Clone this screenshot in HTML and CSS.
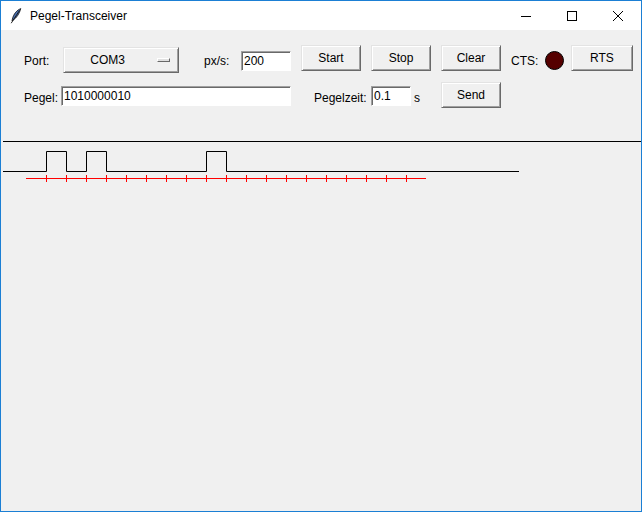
FILE: index.html
```html
<!DOCTYPE html>
<html>
<head>
<meta charset="utf-8">
<title>Pegel-Transceiver</title>
<link rel="stylesheet" href="styles.css">
</head>
<body>
<div class="window">
  <div class="titlebar">
    <svg class="app-icon" width="12" height="16" viewBox="0 0 12 16">
      <path d="M10.8 0.6 C7 2 3.5 6 2.4 11 L2 13 L3.4 12 C6.4 9.8 9.4 6 10.8 0.6 Z" fill="#4a6fae" stroke="#111" stroke-width="0.8"/>
      <path d="M9.5 2.5 L1.2 15.2" stroke="#111" stroke-width="0.9" fill="none"/>
    </svg>
    <span class="title">Pegel-Transceiver</span>
    <div class="caption">
      <div class="cap-btn"><svg width="12" height="12" viewBox="0 0 12 12"><path d="M1 6.5 H11" stroke="#000" stroke-width="1"/></svg></div>
      <div class="cap-btn"><svg width="12" height="12" viewBox="0 0 12 12"><rect x="1.5" y="1.5" width="9" height="9" fill="none" stroke="#000" stroke-width="1"/></svg></div>
      <div class="cap-btn"><svg width="12" height="12" viewBox="0 0 12 12"><path d="M1 1 L11 11 M11 1 L1 11" stroke="#000" stroke-width="1"/></svg></div>
    </div>
  </div>

  <div class="controls">
    <div class="row row1">
      <span class="lbl w-port">Port:</span>
      <div class="btn optmenu"><span class="opt-text">COM3</span><span class="indicator"></span></div>
      <span class="lbl w-pxs">px/s:</span>
      <div class="entry w-pxentry">200</div>
      <div class="btn push ml10">Start</div>
      <div class="btn push ml10">Stop</div>
      <div class="btn push ml10">Clear</div>
      <span class="lbl cts">CTS:</span>
      <span class="led"></span>
      <div class="btn push rts">RTS</div>
    </div>
    <div class="row row2">
      <span class="lbl w-pegel">Pegel:</span>
      <div class="entry w-pegelentry">1010000010</div>
      <span class="lbl w-pzeit">Pegelzeit:</span>
      <div class="entry w-zeitentry">0.1</div>
      <span class="lbl w-s">s</span>
      <div class="btn push send">Send</div>
    </div>
  </div>

  <div class="canvas">
    <svg width="640" height="80" viewBox="1 120 640 80">
      <path d="M3 141.5 H641" stroke="#000" stroke-width="1" fill="none"/>
      <path d="M3 171.5 H46.5 V151.5 H66.5 V171.5 H86.5 V151.5 H106.5 V171.5 H206.5 V151.5 H226.5 V171.5 H519" stroke="#000" stroke-width="1" fill="none"/>
      <path d="M26 178.5 H426" stroke="#ff0000" stroke-width="1" fill="none"/>
      <path d="M46.5 175 V182 M66.5 175 V182 M86.5 175 V182 M106.5 175 V182 M126.5 175 V182 M146.5 175 V182 M166.5 175 V182 M186.5 175 V182 M206.5 175 V182 M226.5 175 V182 M246.5 175 V182 M266.5 175 V182 M286.5 175 V182 M306.5 175 V182 M326.5 175 V182 M346.5 175 V182 M366.5 175 V182 M386.5 175 V182 M406.5 175 V182" stroke="#ff0000" stroke-width="1" fill="none"/>
    </svg>
  </div>
</div>
</body>
</html>
```

FILE: styles.css
```css
html, body {
  margin: 0;
  padding: 0;
  background: #f0f0f0;
}

.window {
  width: 642px;
  height: 512px;
  box-sizing: border-box;
  border: 1px solid #1b7fd4;
  background: #f0f0f0;
  font-family: "Liberation Sans", Arial, sans-serif;
  font-size: 12px;
  color: #000;
  overflow: hidden;
}

.titlebar {
  height: 29px;
  background: #ffffff;
  display: flex;
  align-items: center;
}

.app-icon {
  margin-left: 9px;
  margin-right: 8px;
}

.title {
  font-size: 12px;
  margin-top: 1px;
}

.caption {
  margin-left: auto;
  display: flex;
  height: 29px;
}

.cap-btn {
  width: 46px;
  height: 29px;
  display: flex;
  align-items: center;
  justify-content: center;
}

.controls {
  height: 90px;
  box-sizing: border-box;
  padding: 15px 0 0 23px;
}

.row {
  display: flex;
  align-items: flex-start;
}

.row1 {
  height: 28px;
}

.row2 {
  height: 26px;
  margin-top: 9px;
}

.lbl {
  display: block;
  height: 20px;
  line-height: 20px;
  white-space: nowrap;
}

.row1 .lbl {
  margin-top: 6px;
}

.row2 .lbl {
  margin-top: 6px;
}

.w-port { width: 39px; }
.w-pxs { width: 37px; margin-left: 25px; }
.cts { width: 34px; margin-left: 10px; }
.w-pegel { width: 37px; }
.w-pzeit { width: 57px; margin-left: 23px; }
.w-s { width: 27px; margin-left: 3px; }

.btn {
  box-sizing: border-box;
  height: 26px;
  background: #f0f0f0;
  border: 1px solid;
  border-color: #e3e3e3 #696969 #696969 #e3e3e3;
  box-shadow: inset 1px 1px 0 #ffffff, inset -1px -1px 0 #a0a0a0;
  display: flex;
  align-items: center;
  justify-content: center;
  line-height: 1;
}

.push {
  width: 60px;
}

.ml10 { margin-left: 10px; }

.optmenu {
  width: 116px;
  margin-top: 2px;
  justify-content: flex-start;
  padding: 0 8px 0 1px;
}

.opt-text {
  width: 86px;
  text-align: center;
}

.indicator {
  display: block;
  width: 13px;
  height: 4px;
  margin-left: 7px;
  box-sizing: border-box;
  border: 1px solid;
  border-color: #ffffff #696969 #696969 #ffffff;
  background: #e0e0e0;
}

.entry {
  box-sizing: border-box;
  height: 20px;
  background: #ffffff;
  border-top: 1px solid #a0a0a0;
  border-left: 1px solid #a0a0a0;
  border-right: 1px solid #ffffff;
  border-bottom: 1px solid #ffffff;
  box-shadow: inset 1px 1px 0 #696969;
  padding-left: 2px;
  line-height: 18px;
  white-space: nowrap;
}

.row1 .entry { margin-top: 6px; }
.row2 .entry { margin-top: 4px; }

.w-pxentry { width: 50px; }
.w-pegelentry { width: 230px; }
.w-zeitentry { width: 40px; }

.led {
  display: block;
  width: 19px;
  height: 19px;
  box-sizing: border-box;
  border-radius: 50%;
  background: #550000;
  border: 1px solid #000;
  margin-top: 6px;
}

.rts {
  width: 62px;
  margin-left: 7px;
}

.send {
  margin-left: 0;
}

.canvas {
  height: 80px;
}

.canvas svg {
  display: block;
}
```
